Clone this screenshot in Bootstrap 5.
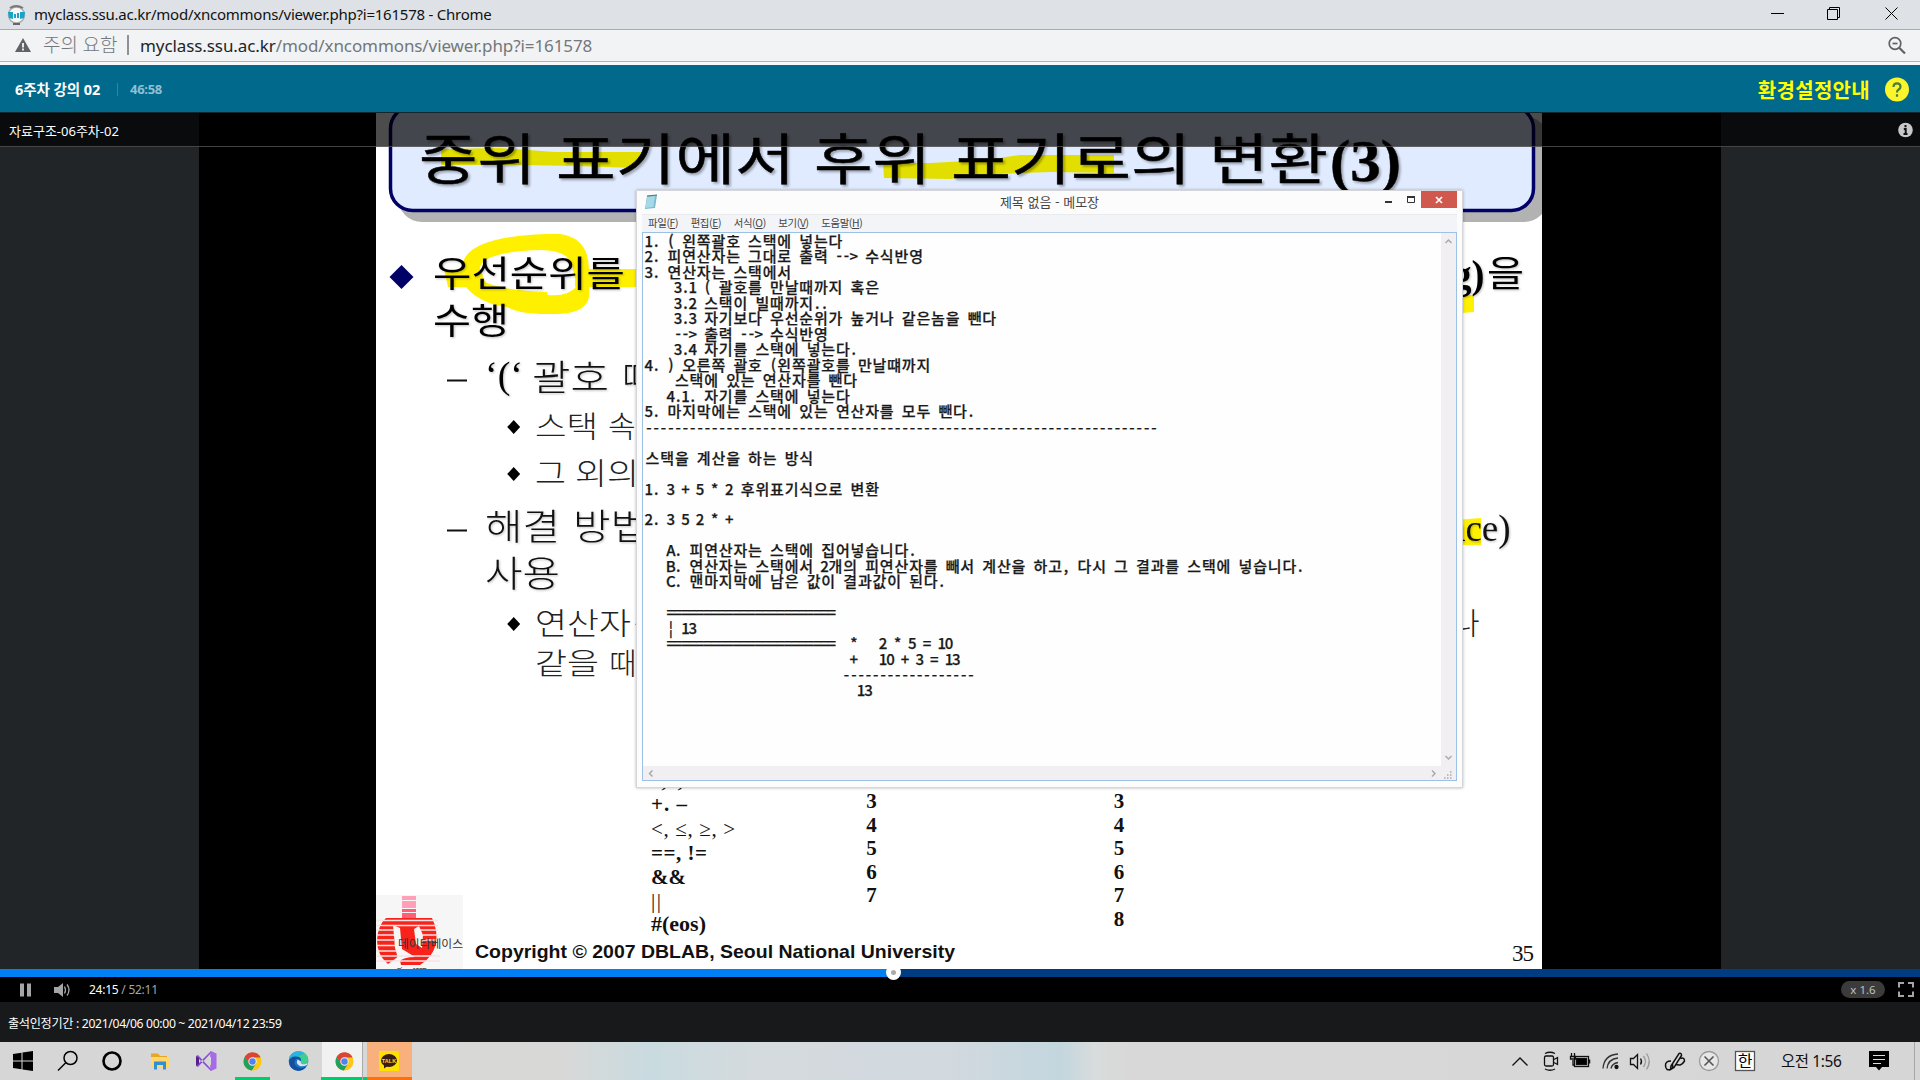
<!DOCTYPE html>
<html lang="ko">
<head>
<meta charset="utf-8">
<title>myclass.ssu.ac.kr/mod/xncommons/viewer.php?i=161578</title>
<link rel="stylesheet" href="https://cdn.jsdelivr.net/npm/bootstrap@5.3.0/dist/css/bootstrap.min.css">
<style>
body{width:1920px;height:1080px;overflow:hidden;font-family:"Noto Sans","Noto Sans CJK KR",sans-serif;background:#000;line-height:1}
svg{display:block;flex:none}
.ui-text{white-space:nowrap}
.title-bar{height:30px;background:#dee1e6;border-bottom:1px solid #a9abae;padding-left:6px}
.title-bar .ui-text{font-size:15px;color:#111;letter-spacing:-.24px;margin-left:7px}
.win-btn{width:57px}
.addr-bar{height:35px;background:#f1f3f4;box-shadow:inset 0 -3px #f7f8f9,inset 0 -4px #b1b4b7;padding:0 14px 5px 15px;color:#74777b}
.addr-bar .warn-label{font-size:19px;font-weight:300;margin-left:12px;width:76px;letter-spacing:-.1px}
.addr-bar .url-text{font-size:17px;margin-left:11px;letter-spacing:-.09px}
.addr-sep{width:2px;height:20px;background:#8f9295}
.lecture-bar{height:48px;background:#00698c;border-bottom:1px solid #15262e;padding:2px 11px 0 15px}
.lecture-name{font-size:14.5px;color:#fff;width:102px;font-weight:700;letter-spacing:-.05px}
.lecture-time{font-size:13px;font-weight:700;color:#8fc0d1;border-left:1px solid #3286a3;padding-left:12px;letter-spacing:-.3px}
.guide{font-size:20px;font-weight:700;color:#ff0;letter-spacing:.3px;padding-top:2px}
.stage-box{height:856px;background:#000}
.side-pad{width:199px;background:#212528}
.side-gap{width:177px}
.side-gap-right{width:179px}
.slide-box{width:1166px;background:#fff}
.clip-head{height:34px;background:rgba(0,0,0,.7);border-bottom:1px solid rgba(120,120,120,.55);padding:0 6px 0 9px;color:#fff;font-size:13px}
.clip-head .ui-text{padding-top:4px}
.memo-win{left:636px;top:190px;width:827px;height:598px;background:#fcfcfd;border:1px solid #d5d5da;box-shadow:0 0 3px rgba(0,0,0,.28);padding:0 5px 6px 5px;font-family:"Noto Sans CJK KR",sans-serif}
.memo-title{height:23px;color:#444;font-size:13px;padding-bottom:2px}
.memo-menu{height:18px;background:#f3f4f7;border-top:1px solid #eaebed;font-size:10.4px;color:#444;padding-left:6px;gap:12.5px}
.memo-menu span{letter-spacing:-.35px}
.memo-body{border:1.5px solid #9dc1e4;background:#fefefe}
.memo-close{width:36px;height:17px;background:#d0584d}
.bar-v{width:15px;background:#f1eff2}
.bar-h{height:14px;background:#f1eff2}
.seek{height:8px;background:#003c82}
.seek-fill{background:#0080f4}
.knob{left:886px;top:-4px;width:15px;height:15px;border-radius:50%;background:#fff}
.knob::after{content:"";position:absolute;left:5px;top:5px;width:5px;height:5px;border-radius:50%;background:#aaa}
.ctrl{height:25px;background:#000;color:#a5a5a5;font-size:12px;padding:0 6px 0 19px}
.play-time{letter-spacing:-.25px;padding-top:1px}
.speed{width:44px;height:17px;border-radius:9px;background:#3b3b3b;color:#c0c0c0;font-size:11.5px;margin-right:13px}
.period{height:40px;background:#17191a;color:#fff;font-size:12.2px;padding:4px 8px 0;letter-spacing:-.34px}
.taskbar{height:38px;background:linear-gradient(90deg,#d6d6d6 0,#d8d8d7 560px,#c9dbe0 650px,#d4dadd 750px,#d2d9df 950px,#c3d6de 1060px,#d8dcdc 1095px,#d8d8d8 1130px,#d6d6d6 100%)}
.slot{width:46px;height:38px}
.slot:first-child{width:45px}
.run{box-shadow:inset 0 -3px #00cc6a}
.task-active{width:41px;background:linear-gradient(#f1f1f1 35px,#00cc6a 35px);border-right:1px solid #aaa}
.task-talk{width:45px;background:linear-gradient(#f8b07c 35px,#ff6f0c 35px)}
.tray{font-size:15.5px;color:#111;letter-spacing:-.4px}
.tray-clock{width:93px;padding:2px 0 0 5px}
.tray-note{margin-right:25px}
.show-desk{width:6px;height:38px;border-left:1px solid #a8a8a8}
.sl-h{font-family:"Noto Sans CJK KR",sans-serif}
.sl-t{font-family:"Liberation Serif",serif}
.soft-2{filter:drop-shadow(2px 2px 1px rgba(0,0,0,.3))}
.soft-1{filter:drop-shadow(1px 1px 1px rgba(0,0,0,.25))}
.memo-text text{font-family:"Noto Sans CJK KR",sans-serif;font-size:15px;font-weight:500;fill:#1a1a1a;stroke:#1a1a1a;stroke-width:.25px;text-anchor:middle;white-space:pre}
</style>
<script src="https://cdn.jsdelivr.net/npm/bootstrap@5.3.0/dist/js/bootstrap.bundle.min.js"></script>
</head>
<body class="d-flex flex-column">
<svg width="0" height="0" class="position-absolute"><defs>
<symbol id="chrome" viewBox="0 0 20 20"><circle cx="10" cy="10" r="9.5" fill="#fbc816"/><path d="M10 10 1.8 5.2A9.5 9.5 0 0 1 18.2 5.2H10Z" fill="#db4437"/><path d="M10 .5A9.5 9.5 0 0 0 1.8 5.2L6 12.3 10 5.7h8.5A9.5 9.5 0 0 0 10 .5Z" fill="#db4437"/><path d="M1.8 5.2A9.5 9.5 0 0 0 9.3 19.4L13.8 12 6.2 12.2Z" fill="#1da15f"/><circle cx="10" cy="10" r="4.4" fill="#f1f1f1"/><circle cx="10" cy="10" r="3.4" fill="#4d84f0"/></symbol>
</defs></svg>

<header class="title-bar d-flex align-items-center">
  <svg width="21" height="22" viewBox="0 0 21 22"><circle cx="10.500" cy="11" r="8" fill="#f7f7f7" stroke="#aaa" stroke-width="1.500"/><path d="M4 4Q10 0 17 4" fill="none" stroke="#777" stroke-width="2"/><path d="M7 20h7" stroke="#666" stroke-width="2"/><path d="M2 8h5v7l-4-1ZM14 8h5l-1 6-4 1ZM8 10h2v4H8Zm3-1h2v5h-2Z" fill="#16a4c8"/></svg>
  <span class="ui-text">myclass.ssu.ac.kr/mod/xncommons/viewer.php?i=161578 - Chrome</span>
  <div class="ms-auto d-flex align-items-center h-100">
    <div class="win-btn d-flex justify-content-center"><svg width="14" height="14"><path d="M0 5.500h13" stroke="#000"/></svg></div>
    <div class="win-btn d-flex justify-content-center"><svg width="15" height="15" fill="none" stroke="#000"><path d="M.5 2.500h10v10H.5ZM2.500 2V.5h10v10H11"/></svg></div>
    <div class="win-btn d-flex justify-content-center"><svg width="14" height="15" fill="none" stroke="#000"><path d="M.5.5l12 12M12.500.5l-12 12"/></svg></div>
  </div>
</header>

<div class="addr-bar d-flex align-items-center">
  <svg width="16" height="14" viewBox="0 0 16 14"><path d="M8 0 16 14H0Z" fill="#5f6368"/><path d="M8 5v4.500M8 10.500v2" stroke="#fff" stroke-width="1.700"/></svg>
  <span class="ui-text warn-label">주의 요함</span>
  <div class="addr-sep ms-2"></div>
  <span class="ui-text url-text"><span class="text-dark">myclass.ssu.ac.kr</span>/mod/xncommons/viewer.php?i=161578</span>
  <svg class="ms-auto" width="18" height="18" fill="none" stroke="#5f6368" stroke-width="1.700"><circle cx="7" cy="7.500" r="5.800"/><path d="M4.500 7.500h5"/><path d="M11 11.500l6 6" stroke-width="2.200"/></svg>
</div>

<nav class="lecture-bar d-flex align-items-center">
  <span class="ui-text lecture-name">6주차 강의 02</span>
  <span class="ui-text lecture-time">46:58</span>
  <span class="ui-text guide ms-auto">환경설정안내</span>
  <svg class="ms-2" width="31" height="26"><circle cx="19" cy="12.500" r="12" fill="#fdf52b"/><path d="M15.500 10Q15.500 6.300 19 6.300T22.500 9.700Q22.500 11.500 20.500 12.700Q19 13.700 19 15.500M19 17.300v2.500" fill="none" stroke="#4a7a3c" stroke-width="2.200"/></svg>
</nav>

<main class="stage-box position-relative d-flex">
  <div class="side-pad"></div><div class="side-gap"></div>
  <div class="slide-box">
  <svg width="1166" height="856" viewBox="376 113 1166 856">
    <rect x="398" y="116" width="1150" height="106" rx="24" fill="#b2b2b2"/>
    <rect x="390.500" y="106.500" width="1143" height="104" rx="22" fill="#e0ebff" stroke="#000066" stroke-width="3.500"/>
    <path d="M441 149 500 148 555 152 641 152 636 168 575 166 520 165 441 165Z" fill="#e2df00"/>
    <path d="M883 163 930 163 985 160 1020 155 1114 155 1114 173 1050 172 1000 174 950 179 884 178Z" fill="#e2df00"/>
    <g class="sl-h soft-2" font-size="55" fill="#000" stroke="#000" stroke-width=".5">
      <text y="179" x="419" textLength="117" lengthAdjust="spacingAndGlyphs">중위</text><text y="179" x="556" textLength="239" lengthAdjust="spacingAndGlyphs">표기에서</text><text y="179" x="814" textLength="117" lengthAdjust="spacingAndGlyphs">후위</text><text y="179" x="951" textLength="240" lengthAdjust="spacingAndGlyphs">표기로의</text><text y="179" x="1209" textLength="119" lengthAdjust="spacingAndGlyphs">변환</text>
      <text class="sl-t" x="1330" y="181" font-size="60" font-weight="700" textLength="71" lengthAdjust="spacingAndGlyphs">(3)</text>
    </g>
    <path fill="#fff000" fill-rule="evenodd" d="M463 266C462 246 500 233 560 234Q589 238 589 270V297Q586 314 555 314Q520 315 507 307C485 305 467 292 463 282ZM480 268C481 257 505 251 540 250Q572 250 573 270L577 286Q568 297 548 295L547 292Q505 291 485 282Z"/>
    <path fill="#fff000" d="M444 269H470V287H448ZM575 269H650V287H575ZM1450 295H1474V312L1450 314ZM1455 520 1481 518V545H1455Z"/>
    <path fill="#000066" d="M401.500 265 413.500 277 401.500 289 389.500 277Z"/>
    <path d="M513.700 420l6.500 7-6.500 7-6.500-7ZM513.700 467l6.500 7-6.500 7-6.500-7ZM513.700 617l6.500 7-6.500 7-6.500-7Z"/>
    <path d="M447 380.500h20M447 530.500h20" stroke="#111" stroke-width="2"/>
    <g class="sl-h soft-1" fill="#000">
      <text x="433" y="287" font-size="36" textLength="192" lengthAdjust="spacingAndGlyphs">우선순위를</text>
      <text x="433" y="334" font-size="36" textLength="76" lengthAdjust="spacingAndGlyphs">수행</text>
      <text x="1487" y="287" font-size="36" textLength="37" lengthAdjust="spacingAndGlyphs">을</text>
      <text x="1452" y="288" font-size="39" font-weight="700" class="sl-t">g)</text>
      <text x="485" y="388" font-size="38" class="sl-t">‘(‘</text>
    </g>
    <g class="sl-h soft-1" fill="#111" font-weight="300">
      <text x="532" y="391" font-size="36" textLength="77" lengthAdjust="spacingAndGlyphs">괄호</text><text x="622" y="391" font-size="36">때</text>
      <text x="485" y="540" font-size="36" textLength="75" lengthAdjust="spacingAndGlyphs">해결</text><text x="573" y="540" font-size="36" textLength="75" lengthAdjust="spacingAndGlyphs">방법</text>
      <text x="485" y="587" font-size="36" textLength="75" lengthAdjust="spacingAndGlyphs">사용</text>
      <text x="1449" y="541" font-size="37" font-weight="400" class="sl-t">ace)</text>
    </g>
    <g class="sl-h" fill="#222" font-weight="300" font-size="30">
      <text x="535" y="437" textLength="63" lengthAdjust="spacingAndGlyphs">스택</text><text x="608" y="437">속</text>
      <text x="535" y="484" textLength="31" lengthAdjust="spacingAndGlyphs">그</text><text x="575" y="484" textLength="64" lengthAdjust="spacingAndGlyphs">외의</text>
      <text x="535" y="634" textLength="96" lengthAdjust="spacingAndGlyphs">연산자</text><text x="634" y="634">는</text><text x="1452" y="634">나</text>
      <text x="535" y="674" textLength="64" lengthAdjust="spacingAndGlyphs">같을</text><text x="609" y="674">때</text>
    </g>
    <g class="sl-t" fill="#111" font-size="21" font-weight="700">
      <text x="651" y="787">*, /, %</text>
      <text x="651" y="811" textLength="36">+. –</text>
      <text x="651" y="836" textLength="84" font-weight="400">&lt;, ≤, ≥, &gt;</text>
      <text x="651" y="860" textLength="56">==, !=</text>
      <text x="651" y="884" textLength="35">&amp;&amp;</text>
      <text x="651" y="908" textLength="10" font-weight="400">||</text>
      <text x="651" y="931" textLength="55" lengthAdjust="spacingAndGlyphs">#(eos)</text>
      <g text-anchor="middle"><text x="871.500" y="808">3</text><text x="871.500" y="832">4</text><text x="871.500" y="855">5</text><text x="871.500" y="879">6</text><text x="871.500" y="902">7</text>
      <text x="1119" y="808">3</text><text x="1119" y="832">4</text><text x="1119" y="855">5</text><text x="1119" y="879">6</text><text x="1119" y="902">7</text><text x="1119" y="926">8</text></g>
      <text x="1512" y="961" font-size="23" font-weight="400" textLength="22">35</text>
    </g>
    <rect x="376" y="895" width="87" height="74" fill="#f6f6f6"/>
    <path fill="#ffa0b8" d="M402 896h14v4h-14ZM402 901h14v7h-14Z"/><path fill="#ff6078" d="M402 909h14v3h-14ZM402 913h14v5h-14Z"/>
    <path fill="#f8241c" d="M386 918H432Q438 930 436 944Q432 958 420 965H401L399 956 388 964Q377 955 377 940 378 925 386 918Z"/>
    <path fill="#f6f6f6" d="M393 925 400 928 402 949 415 957Q403 957 399 962L395 948ZM414 929 419 926 423 935 422 948 416 944Z"/>
    <path stroke="#f6e4e4" stroke-width="1.300" d="M376 920.500h62M376 925.500h62M376 930h18M420 930h18M376 935h18M423 935h15M376 940h18M423 940h15M376 945.500h19M376 951h21M376 956h64M376 961h64"/>
    <text x="398" y="948" class="sl-h" font-size="11.500" fill="#333" textLength="65" lengthAdjust="spacingAndGlyphs">데이타베이스</text>
    <text x="396" y="974" font-size="9" fill="#444" font-family="Liberation Sans" textLength="31">Since 1995</text>
    <text x="475" y="957.500" font-size="19" font-weight="700" fill="#111" font-family="Liberation Sans" textLength="480" lengthAdjust="spacingAndGlyphs">Copyright © 2007 DBLAB, Seoul National University</text>
  </svg>
  </div>
  <div class="side-gap-right"></div><div class="side-pad"></div>
  <div class="clip-head position-absolute top-0 start-0 w-100 d-flex align-items-center justify-content-between">
    <span class="ui-text">자료구조-06주차-02</span>
    <svg width="17" height="16" viewBox="0 0 17 16"><circle cx="8.500" cy="8" r="7.300" fill="#c8c8c8"/><path d="M8.500 3v2.200M6.800 7h1.900v5M6.500 12h4" stroke="#111" stroke-width="2" fill="none"/></svg>
  </div>
</main>

<section class="memo-win position-absolute d-flex flex-column">
  <div class="memo-title position-relative d-flex justify-content-center align-items-center">
    <svg class="position-absolute start-0" width="17" height="16"><path d="M5 2 15 1l-2 13-10 1Z" fill="#79b8cf"/><path d="M5 3 13 2l-1.500 11-8 1Z" fill="#a6d9e8"/><path d="M5 2 15 1" stroke="#667" /></svg>
    <span class="ui-text">제목 없음 - 메모장</span>
    <div class="position-absolute top-0 end-0 d-flex">
      <svg width="37" height="17" fill="none" stroke="#333"><path d="M1 11h7" stroke-width="2"/><path d="M23.500 5.500h7v6h-7Z"/><path d="M23 6h8" stroke-width="2"/></svg>
      <div class="memo-close d-flex align-items-center justify-content-center"><svg width="8" height="8"><path d="M1 1l6 6M7 1 1 7" stroke="#fff" stroke-width="1.700"/></svg></div>
    </div>
  </div>
  <div class="memo-menu d-flex align-items-center">
    <span class="ui-text">파일(<u>F</u>)</span><span class="ui-text">편집(<u>E</u>)</span><span class="ui-text">서식(<u>O</u>)</span><span class="ui-text">보기(<u>V</u>)</span><span class="ui-text">도움말(<u>H</u>)</span>
  </div>
  <div class="memo-body flex-fill d-flex flex-column">
    <div class="d-flex flex-fill">
      <div class="flex-fill">
      <svg class="memo-text" width="790" height="532" viewBox="643 233 790 532"><text>1. ( 왼쪽괄호 스택에 넣는다</text><text>2. 피연산자는 그대로 출력 --&gt; 수식반영</text><text>3. 연산자는 스택에서</text><text>    3.1 ( 괄호를 만날때까지 혹은</text><text>    3.2 스택이 빌때까지..</text><text>    3.3 자기보다 우선순위가 높거나 같은놈을 뺀다</text><text>    --&gt; 출력 --&gt; 수식반영</text><text>    3.4 자기를 스택에 넣는다.</text><text>4. ) 오른쪽 괄호 (왼쪽괄호를 만날떄까지</text><text>    스택에 있는 연산자를 뺀다</text><text>   4.1. 자기를 스택에 넣는다</text><text>5. 마지막에는 스택에 있는 연산자를 모두 뺀다.</text><text>----------------------------------------------------------------------</text><text></text><text>스택을 계산을 하는 방식</text><text></text><text>1. 3 + 5 * 2 후위표기식으로 변환</text><text></text><text>2. 3 5 2 * +</text><text></text><text>   A. 피연산자는 스택에 집어넣습니다.</text><text>   B. 연산자는 스택에서 2개의 피연산자를 빼서 계산을 하고, 다시 그 결과를 스택에 넣습니다.</text><text>   C. 맨마지막에 남은 값이 결과값이 된다.</text><text></text><text>   =======================</text><text>   ¦ 13</text><text>   =======================  *   2 * 5 = 10</text><text>                            +   10 + 3 = 13</text><text>                           ------------------</text><text>                             13</text></svg>
      </div>
      <div class="bar-v d-flex flex-column justify-content-between align-items-center py-1"><svg width="9" height="9" fill="none" stroke="#aaa" stroke-width="1.500"><path d="M1.500 6 4.500 3l3 3"/></svg><svg width="9" height="9" fill="none" stroke="#aaa" stroke-width="1.500"><path d="M1.500 3l3 3 3-3"/></svg></div>
    </div>
    <div class="bar-h d-flex justify-content-between align-items-center px-1"><svg width="9" height="9" fill="none" stroke="#aaa" stroke-width="1.500"><path d="M5.500 1.500l-3 3 3 3"/></svg><svg width="22" height="11" fill="none" stroke="#aaa" stroke-width="1.500"><path d="M2 2.500l3 3-3 3"/><path d="M14 10h1.500M17 10h1.500M20 10h1.500M17 7h1.500M20 7h1.500M20 4h1.500"/></svg></div>
  </div>
</section>

<div class="seek d-flex position-relative"><div class="seek-fill" style="width:46.500%"></div><div class="knob position-absolute"></div></div>
<div class="ctrl d-flex align-items-center">
  <svg width="70" height="18"><path d="M1 2.500h4v13H1ZM8 2.500h4v13H8Z" fill="#a5a5a5"/><path d="M35 6h4l5-4v14l-5-4h-4Z" fill="#a5a5a5"/><path d="M45.500 5.500Q47.500 9 45.500 12.500M48 3.500Q52 9 48 14.500" stroke="#a5a5a5" stroke-width="1.300" fill="none"/></svg>
  <span class="ui-text play-time"><span class="text-white">24:15</span> / 52:11</span>
  <div class="speed ms-auto d-flex align-items-center justify-content-center">x 1.6</div>
  <svg width="16" height="15" fill="none" stroke="#a5a5a5" stroke-width="2"><path d="M1 5.500V1h5M10 1h5v4.500M15 9.500V14h-5M6 14H1V9.500"/></svg>
</div>
<div class="period d-flex align-items-center"><span class="ui-text">출석인정기간 : 2021/04/06 00:00 ~ 2021/04/12 23:59</span></div>

<footer class="taskbar d-flex align-items-center">
  <div class="slot d-flex align-items-center justify-content-center"><svg width="20" height="20"><path d="M0 3 8.500 1.800V9.500H0ZM9.500 1.600 20 0V9.500H9.500ZM0 10.500H8.500V18.300L0 17ZM9.500 10.500H20V20L9.500 18.500Z"/></svg></div>
  <div class="slot d-flex align-items-center justify-content-center"><svg width="22" height="22" fill="none" stroke="#000" stroke-width="1.500"><circle cx="13.500" cy="8" r="6.500"/><path d="M9 12.500 1 20.500"/></svg></div>
  <div class="slot d-flex align-items-center justify-content-center"><svg width="20" height="20" class="me-1"><circle cx="10" cy="10" r="8.500" fill="none" stroke="#000" stroke-width="2.600"/></svg></div>
  <div class="slot d-flex align-items-center justify-content-center"><svg width="18" height="18"><path d="M0 1.500H7L9 4H16V16H0Z" fill="#e8a622"/><path d="M0 5H18V16H0Z" fill="#ffd76b"/><path d="M3 17.500V9.500H15V17.500H12V13H6V17.500Z" fill="#338fd5"/></svg></div>
  <div class="slot d-flex align-items-center justify-content-center"><svg width="21" height="20"><path d="M0 5 2 4 15 18 15 20Z M0 15 2 16 15 2V0Z" fill="#8a4fd0"/><path d="M0 5v10l3-2V7Z" fill="#52218a"/><path d="M15 0 20.500 2.500V17.500L15 20 14 15V5Z" fill="#a66be6"/><path d="M15 5.500V14.500L9.500 10Z" fill="#d6d6d6"/></svg></div>
  <div class="slot d-flex align-items-center justify-content-center"><div class="run h-100 d-flex align-items-center px-2"><svg width="19" height="19"><use href="#chrome"/></svg></div></div>
  <div class="slot d-flex align-items-center justify-content-center"><svg width="21" height="20"><circle cx="10.500" cy="10" r="9.800" fill="#1678c8"/><path d="M1 8Q3 0 11 .2Q20 1 20.300 9Q20 13.500 15.500 13.500Q12 13 13 11Q14 5 8 5Q3 5 1 8Z" fill="#3fcf8e"/><path d="M1 8Q3 0 11 .2Q14 .5 16 2Q12 6 1 8Z" fill="#2bb3df"/><path d="M8 8Q5 12 8 15Q12 19 18 15.500Q15 20 10 19.800Q2 19 1 11Q2 5 8 5.500Q13 6 13 10Q11 7 8 8Z" fill="#124f9d"/><path d="M9.500 8.500Q7.500 13 12 15Q15 16 19 14Q20 13 19.500 12Q17 14 14 13Q12 12 13 10.500Z" fill="#d8e6ee"/></svg></div>
  <div class="slot d-flex align-items-center run ps-0 ms-0">
    <div class="task-active ms-auto me-1 h-100 d-flex align-items-center justify-content-center ps-1"><svg width="19" height="19"><use href="#chrome"/></svg></div>
  </div>
  <div class="task-talk ms-0 h-100 d-flex align-items-center ps-2"><svg width="28" height="21"><rect x="4" width="20" height="20" fill="#ffe000"/><ellipse cx="14" cy="9.500" rx="8" ry="6.500" fill="#391b1b"/><path d="M9 13v4.500L14 14Z" fill="#391b1b"/><text x="14" y="11.700" font-size="5.500" font-weight="700" fill="#ffe000" text-anchor="middle" font-family="Liberation Sans">TALK</text></svg></div>
  <div class="ms-auto d-flex align-items-center tray">
    <svg width="270" height="38" viewBox="1506 1042 270 38" fill="none" stroke="#111" stroke-width="1.300">
      <path d="M1512.500 1065.500l7.500-7.500 7.500 7.500"/>
      <rect x="1544.500" y="1056" width="9" height="10" rx="1.500"/><path d="M1554 1059.500l3.500-2v7l-3.500-2M1545 1053.500q5-2.500 10 0M1545 1069q5 2.500 10 0"/>
      <rect x="1576.500" y="1058.500" width="10" height="6" fill="#000"/><rect x="1574.500" y="1056.500" width="14" height="10"/><path d="M1589.500 1059.500v4" stroke-width="1.500"/><path d="M1571.500 1053v3M1574.500 1053v3M1570.500 1056.500h5v2.500h-5ZM1573 1060v5h2"/>
      <path d="M1603 1068.500Q1604 1055 1618 1054M1607 1068.500Q1608 1059 1618 1058M1611 1068.500Q1612 1063.500 1618 1062.500" stroke="#333"/><circle cx="1616.500" cy="1067" r="1.500" fill="#111"/>
      <path d="M1630.500 1058.500h3l4-4v14l-4-4h-3Z"/><path d="M1640.500 1058.500q2 3 0 6"/><path d="M1643.500 1056q4 5.500 0 11M1646.500 1053.500q5.500 8 0 16" stroke="#999"/>
      <path d="M1671 1066 1679 1053.500q2.500-1 2.500 2L1674 1067.500l-3.500 2ZM1671 1061q-6 0-5.500 5t5 3.500q3-1 2-5M1676 1064q5 3 8.500-3 0-4-4-2.500" stroke-width="1.500"/>
      <circle cx="1709" cy="1061" r="9.500" fill="#e6e6e6" stroke="#999"/><path d="M1704.500 1056.500l9 9M1713.500 1056.500l-9 9" stroke="#555" stroke-width="1.600"/>
      <rect x="1735.500" y="1051.500" width="19" height="19" fill="#fff" stroke="#555"/><text x="1745" y="1067" text-anchor="middle" font-size="16" fill="#000" stroke="none" font-family="Noto Sans CJK KR">한</text>
    </svg>
    <span class="ui-text tray-clock">오전 1:56</span>
    <svg class="tray-note" width="20" height="20"><path d="M0 0H20V16H13L10 19.500 7 16H0Z"/><path d="M4 4.500h12M4 8.500h12M4 12.500h8" stroke="#ddd"/></svg>
    <div class="show-desk"></div>
  </div>
</footer>
<script>
// Lay the memo out on a fixed character grid: Hangul takes two cells, everything else one.
const CELL=7.32,LEFT=645.2,TOP=247,STEP=15.47;
document.querySelectorAll('.memo-text text').forEach((t,row)=>{
  let cell=0;
  const xs=[...t.textContent].map(c=>{
    const w=/[가-힣]/.test(c)?2:1;
    const x=LEFT+(cell+w/2)*CELL;cell+=w;
    return x.toFixed(2);
  });
  t.setAttribute('x',xs.join(' '));
  t.setAttribute('y',(TOP+row*STEP).toFixed(2));
});
</script>
</body>
</html>
